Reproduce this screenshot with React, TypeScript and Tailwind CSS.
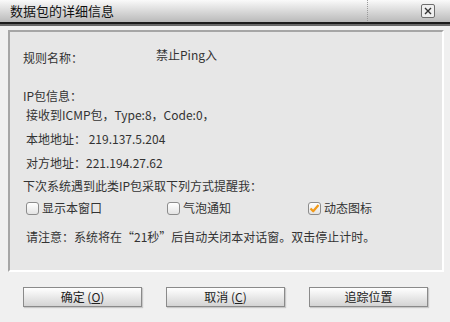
import React from "react";

const font = { fontFamily: '"Noto Sans CJK SC", "Liberation Sans", sans-serif' };

const CheckBox = ({ checked, label }: { checked?: boolean; label: string }) => (
  <div className="flex items-center gap-[3px]">
    <div className="w-[13px] h-[13px] rounded-[3px] border border-[#8c8c8c] bg-gradient-to-b from-white to-[#e4e4e4] flex items-center justify-center">
      {checked && (
        <svg width="11" height="11" viewBox="0 0 11 11">
          <path d="M1.5 5.5 L4.2 8.3 L9.5 2" fill="none" stroke="#f29a1a" strokeWidth="2.2" strokeLinejoin="round" />
        </svg>
      )}
    </div>
    <span>{label}</span>
  </div>
);

const Button = ({ children }: { children: React.ReactNode }) => (
  <button className="w-[119px] h-[20px] border border-[#8a8a8a] bg-gradient-to-b from-white to-[#d4d4d4] text-[12px] text-[#222] leading-none shadow-[1px_1px_1px_#c8c8c8] flex items-center justify-center">
    {children}
  </button>
);

export default function App() {
  return (
    <div className="w-[450px] h-[322px] bg-[#f0f0f0] flex flex-col overflow-hidden" style={font}>
      {/* title bar */}
      <div className="h-[22px] bg-gradient-to-b from-[#fafafa] to-[#bababa] flex items-center relative">
        <span className="ml-[10px] text-[13px] text-[#111]">数据包的详细信息</span>
        <div className="absolute left-[367px] top-0 h-[21px] border-l border-dotted border-[#9a9a9a]" />
        <div className="absolute left-[421px] top-[4px] w-[14px] h-[14px] rounded-[2px] border border-[#6e6e6e] bg-[#efefef] flex items-center justify-center">
          <svg width="8" height="8" viewBox="0 0 8 8">
            <path d="M1 1 L7 7 M7 1 L1 7" stroke="#333" strokeWidth="1.4" />
          </svg>
        </div>
      </div>
      <div className="h-[2px] bg-[#1c1c1c]" />
      <div className="h-[2px] bg-[#6a6a6a]" />

      {/* panel */}
      <div className="mt-[4px] ml-[8px] mr-[6px] h-[242px] bg-[#e7e7e7] border-t-2 border-l-2 border-[#a6a6a6] border-r-2 border-b-2 border-r-white border-b-white text-[12px] leading-[14px] text-[#333] pl-[13px]">
        <div className="mt-[19px] flex">
          <span className="w-[133px]">规则名称：</span>
          <span className="-mt-[3px]">禁止Ping入</span>
        </div>
        <div className="mt-[24px]">IP包信息：</div>
        <div className="mt-[5px] ml-[3px]">接收到ICMP包，Type:8，Code:0，</div>
        <div className="mt-[10px] ml-[3px]">本地地址： 219.137.5.204</div>
        <div className="mt-[10px] ml-[3px]">对方地址：221.194.27.62</div>
        <div className="mt-[9px]">下次系统遇到此类IP包采取下列方式提醒我：</div>
        <div className="mt-[8px] ml-[3px] flex">
          <div className="w-[141px]"><CheckBox label="显示本窗口" /></div>
          <div className="w-[141px]"><CheckBox label="气泡通知" /></div>
          <CheckBox checked label="动态图标" />
        </div>
        <div className="mt-[15px] ml-[3px]">请注意：系统将在“21秒”后自动关闭本对话窗。双击停止计时。</div>
      </div>

      {/* buttons */}
      <div className="mt-[15px] ml-[23px] flex gap-[24px]">
        <Button>确定 (<span className="underline">O</span>)</Button>
        <Button>取消 (<span className="underline">C</span>)</Button>
        <Button>追踪位置</Button>
      </div>
    </div>
  );
}
